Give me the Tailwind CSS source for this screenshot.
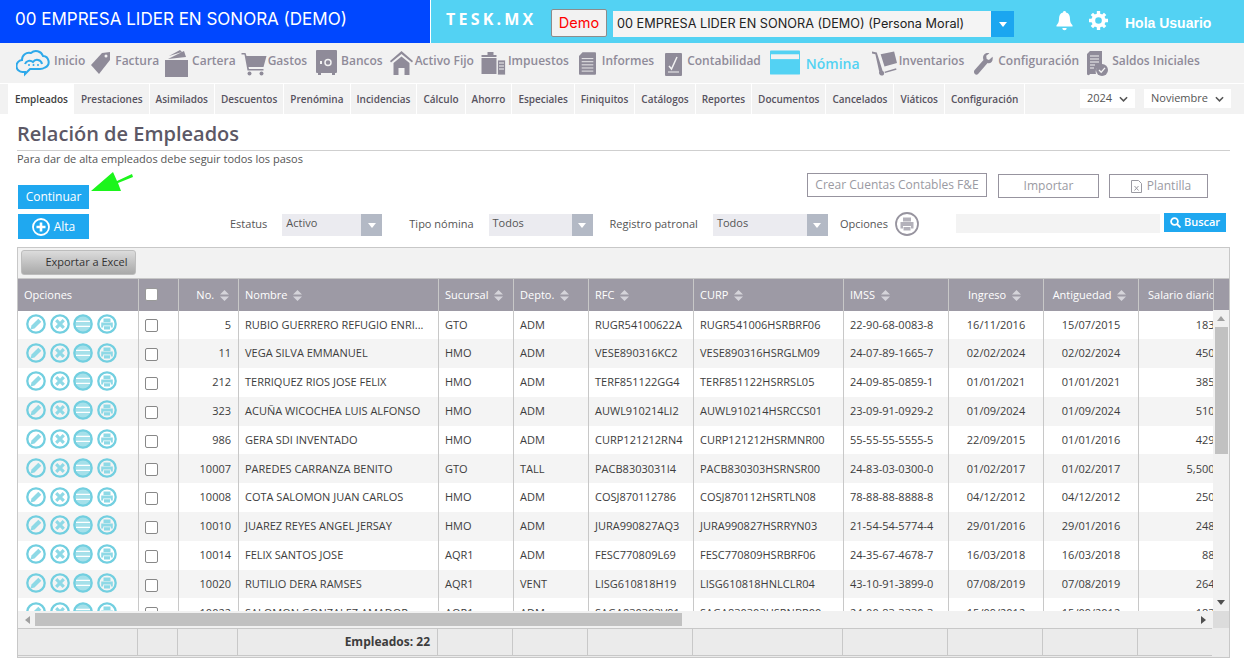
<!DOCTYPE html>
<html lang="es">
<head>
<meta charset="utf-8">
<script src="https://cdn.jsdelivr.net/npm/@tailwindcss/browser@4"></script>
<title>Relación de Empleados</title>
</head>
<body class="bg-white font-['Open_Sans',sans-serif] text-[11px] text-[#3d3d3d] overflow-hidden w-[1244px] h-[668px]">
<svg class="hidden">
  <symbol id="i-edit" viewBox="0 0 20 20"><circle cx="10" cy="10" r="8.700" fill="none" stroke="#72cfe0" stroke-width="2.300"/><path d="M4.500 15.500l1-4 6.800-6.800 3 3-6.800 6.800z" fill="#8ed9e6"/></symbol>
  <symbol id="i-del" viewBox="0 0 20 20"><circle cx="10" cy="10" r="8.700" fill="none" stroke="#72cfe0" stroke-width="2.300"/><path d="M6.200 6.200l7.600 7.600M13.800 6.200l-7.600 7.600" stroke="#8ed9e6" stroke-width="3.200" fill="none"/></symbol>
  <symbol id="i-list" viewBox="0 0 20 20"><circle cx="10" cy="10" r="8.700" fill="#a5e0ea" stroke="#72cfe0" stroke-width="2.300"/><path d="M3 7.300h14M3 12.300h14" stroke="#fff" stroke-width="1.200" fill="none"/></symbol>
  <symbol id="i-print" viewBox="0 0 20 20"><circle cx="10" cy="10" r="8.700" fill="none" stroke="#72cfe0" stroke-width="2.300"/><path d="M6.500 4.500h7v3.500h-7zM4.200 8.500h11.600v5h-2v-2H6.200v2h-2zM7 12.200h6v3.300H7z" fill="#8ed9e6"/></symbol>
  <symbol id="i-sort" viewBox="0 0 9 11"><path d="M4.500 0L9 4.600H0zM4.500 11L0 6.400h9z" fill="#d5d4da"/></symbol>
  <symbol id="i-chev" viewBox="0 0 10 6"><path d="M1 1l4 4 4-4" fill="none" stroke="#555" stroke-width="1.700"/></symbol>
  <symbol id="i-tri" viewBox="0 0 10 6"><path d="M0 0h10L5 6z" fill="#fff"/></symbol>
</svg>

<!-- Barra superior -->
<header class="flex h-[44px] border-b border-[#f2f2f2]">
  <div class="w-[430px] bg-[#0047ff] text-white font-['Inter',sans-serif] text-[17px] pl-[15px] leading-[38px] mr-px whitespace-nowrap">00 EMPRESA LIDER EN SONORA (DEMO)</div>
  <div class="flex-1 bg-[#53d2f3] flex items-start">
    <span class="ml-[15px] mt-[9px] font-bold text-white text-[16px] tracking-[3.200px] leading-[20px] w-[105px] whitespace-nowrap">TESK.MX</span>
    <button class="w-[56px] h-[28px] mt-[9px] bg-[#f2f2f2] border border-[#8c8c8c] rounded-[2px] text-[#ff0000] font-['Inter',sans-serif] text-[14.500px]">Demo</button>
    <div class="ml-[6px] mt-[11px] w-[401px] h-[26px] bg-[#f4f4f4] flex items-center">
      <span class="flex-1 pl-[4px] text-[12.700px] text-[#222] font-['Inter',sans-serif] whitespace-nowrap overflow-hidden">00 EMPRESA LIDER EN SONORA (DEMO) (Persona Moral)</span>
      <span class="w-[23px] h-[26px] bg-[#1ba6f0] flex items-center justify-center"><svg class="w-[8px] h-[5px]"><use href="#i-tri"/></svg></span>
    </div>
    <svg class="ml-[42px] mt-[11px] w-[17px] h-[20px]" viewBox="0 0 17 20" fill="#fff"><path d="M8.500 0a1.500 1.500 0 0 1 1.500 1.600c3 .7 4 3.200 4 6.400 0 3.300 1 4.400 2.500 6.200v1.300H.5v-1.300C2 12.400 3 11.300 3 8c0-3.200 1-5.700 4-6.400A1.500 1.500 0 0 1 8.500 0zM6.300 17h4.400a2.200 2.200 0 0 1-4.400 0z"/></svg>
    <svg class="ml-[16px] mt-[11px] w-[19px] h-[19px]" viewBox="0 0 20 20"><circle cx="10" cy="10" r="5.500" fill="none" stroke="#fff" stroke-width="4"/><path d="M10 10L10 0M10 10L10 20M10 10L0 10M10 10L20 10M10 10L3 3M10 10L17 17M10 10L17 3M10 10L3 17" stroke="#fff" stroke-width="3.500" stroke-dasharray="0 6.500 3.500 10"/></svg>
    <span class="ml-[17px] mt-[14px] font-['Liberation_Sans',sans-serif] font-bold text-white text-[14px] leading-[18px] whitespace-nowrap">Hola Usuario</span>
  </div>
</header>

<!-- Menú principal -->
<nav class="h-[39px] bg-[#f2f2f2] flex items-start pl-[16px] text-[12px] font-semibold text-[#8f8b99] whitespace-nowrap leading-[17px]">
  <svg class="mt-[4px] w-[35px] h-[30px]" viewBox="0 0 35 30" fill="none" stroke="#2ea9ea" stroke-width="2"><path d="M9 24H7a6 6 0 0 1-1-12 7 7 0 0 1 9-7 7.500 7.500 0 0 1 12 3 6 6 0 0 1 2 11.500c-1.500 1-3 1.500-5 1.500H14l-5 5z"/><path d="M9 16a5 5 0 0 1 8-2 5 5 0 0 1 9 2"/><path d="M13 17v.1M17.500 17v.1M22 17v.1" stroke-linecap="round"/></svg>
  <span class="ml-[3px] mt-[8px]">Inicio</span>
  <svg class="ml-[5px] mt-[7px] w-[21px] h-[24px]" viewBox="0 0 21 24" fill="#8f8b99"><path d="M1 14L12 2l8-1 0 8L9 23z"/><circle cx="16" cy="5" r="1.500" fill="#f2f2f2"/></svg>
  <span class="ml-[4px] mt-[8px]">Factura</span>
  <svg class="ml-[6px] mt-[5px] w-[25px] h-[28px]" viewBox="0 0 25 28" fill="#8f8b99"><path d="M3 10L19 2l2 6zM4 7L15 1l2 2zM0 11h23v17H0z"/></svg>
  <span class="ml-[2px] mt-[8px]">Cartera</span>
  <svg class="ml-[5px] mt-[8px] w-[26px] h-[24px]" viewBox="0 0 25 24" fill="#8f8b99"><path d="M0 1h4l1 3h20l-3 11H7l.5 2H22v1.500H6L3 2.500H0z"/><circle cx="8" cy="21.500" r="2"/><circle cx="20" cy="21.500" r="2"/></svg>
  <span class="ml-px mt-[8px]">Gastos</span>
  <svg class="ml-[9px] mt-[6px] w-[21px] h-[25px]" viewBox="0 0 21 25"><path d="M1 0h19a1 1 0 0 1 1 1v21a1 1 0 0 1-1 1h-1v2h-3v-2H5v2H2v-2H1a1 1 0 0 1-1-1V1a1 1 0 0 1 1-1z" fill="#8f8b99"/><circle cx="12" cy="12.500" r="3" fill="none" stroke="#f2f2f2" stroke-width="1.500"/><path d="M4 11h2v3H4z" fill="#f2f2f2"/></svg>
  <span class="ml-[4px] mt-[8px]">Bancos</span>
  <svg class="ml-[7px] mt-[7px] w-[23px] h-[24px]" viewBox="0 0 23 24" fill="#8f8b99"><path d="M11.500 0L23 10l-1 1.500L11.500 3 1 11.500 0 10zM3.500 12l8-6.500 8 6.500v12h-5v-7h-6v7h-5z"/></svg>
  <span class="ml-[2px] mt-[8px]">Activo Fijo</span>
  <svg class="ml-[7px] mt-[8px] w-[25px] h-[23px]" viewBox="0 0 24 23" fill="#8f8b99"><path d="M6 0h6v3h3v2H0V3h6zM0 6h15v16H0z"/><path d="M16 8h8v15h-8z" stroke="#f2f2f2" stroke-width=".8"/><path d="M17.500 11h5M17.500 14h5M17.500 17h5" stroke="#f2f2f2"/></svg>
  <span class="ml-[2px] mt-[8px]">Impuestos</span>
  <svg class="ml-[10px] mt-[7px] w-[17px] h-[25px]" viewBox="0 0 19 25"><path d="M4 0h14a1 1 0 0 1 1 1v23a1 1 0 0 1-1 1H1a1 1 0 0 1-1-1V4z" fill="#8f8b99"/><path d="M3 7h13M3 10.500h13M3 14h13M3 17.500h13M3 21h13" stroke="#f2f2f2" stroke-width="1"/></svg>
  <span class="ml-[6px] mt-[8px]">Informes</span>
  <svg class="ml-[11px] mt-[7px] w-[17px] h-[25px]" viewBox="0 0 17 25"><path d="M1 2h15a1 1 0 0 1 1 1v21a1 1 0 0 1-1 1H1a1 1 0 0 1-1-1V3a1 1 0 0 1 1-1z" fill="#8f8b99"/><path d="M4 15l2.500 3L12 6" fill="none" stroke="#f2f2f2" stroke-width="1.500"/><path d="M3 21h11" stroke="#f2f2f2"/></svg>
  <span class="ml-[5px] mt-[8px]">Contabilidad</span>
  <svg class="ml-[9px] mt-[6px] w-[30px] h-[25px]" viewBox="0 0 31 25"><path d="M0 1a1 1 0 0 1 1-1h29a1 1 0 0 1 1 1v23a1 1 0 0 1-1 1H1a1 1 0 0 1-1-1z" fill="#53d2f3"/><path d="M1 4h29v5H1z" fill="#f2f2f2"/></svg>
  <span class="ml-[6px] mt-[11px] text-[14px] font-semibold text-[#53d2f3]">Nómina</span>
  <svg class="ml-[12px] mt-[7px] w-[25px] h-[25px]" viewBox="0 0 26 25" fill="#8f8b99"><path d="M0 0l5 1 6 19a3 3 0 0 1 1 4.500 3 3 0 0 1-4.500-3.500L3.500 3 0 2zM9 3l14-3 3 12-13 3.500z"/><path d="M13 21l12-3.500.5 1.500-12 3.500z"/></svg>
  <span class="ml-[2px] mt-[8px]">Inventarios</span>
  <svg class="ml-[10px] mt-[8px] w-[19px] h-[24px]" viewBox="0 0 21 24" fill="#8f8b99"><path d="M20.500 4l-4 3.500L14 6.500 13.500 3 17 0c-3.500-1-7 1-7 5 0 1 .2 1.700.5 2.500L.5 19c-1 1.500-.5 3 .5 4s2.500 1 3.500 0L15 11c3.500 1 6.500-2 5.500-7z"/></svg>
  <span class="ml-[5px] mt-[8px]">Configuración</span>
  <svg class="ml-[8px] mt-[7px] w-[21px] h-[25px]" viewBox="0 0 21 25"><path d="M3 0h12v14a7 7 0 0 0-6 9H3a1 1 0 0 1-3-1V3z" fill="#8f8b99"/><path d="M3 5h9M3 8h9M3 11h9M3 14h5M3 17h4" stroke="#f2f2f2"/><circle cx="15" cy="19" r="6" fill="#8f8b99"/><path d="M12 19l2.200 2.200L18 16.800" stroke="#f2f2f2" stroke-width="1.300" fill="none"/></svg>
  <span class="ml-[4px] mt-[8px]">Saldos Iniciales</span>
</nav>

<!-- Pestañas -->
<div class="h-[31px] bg-[#f2f2f2] border-t border-white flex items-stretch pl-[8px] text-[10px] font-semibold text-[#57535f] whitespace-nowrap">
  <a class="bg-white pl-[7px] pr-[6px] flex items-center text-[#3d3d3d]">Empleados</a>
  <a class="pl-[7px] pr-[6px] flex items-center border-r border-white">Prestaciones</a>
  <a class="px-[6px] flex items-center border-r border-white">Asimilados</a>
  <a class="px-[6px] flex items-center border-r border-white">Descuentos</a>
  <a class="px-[6px] flex items-center border-r border-white">Prenómina</a>
  <a class="px-[6px] flex items-center border-r border-white">Incidencias</a>
  <a class="px-[6px] flex items-center border-r border-white">Cálculo</a>
  <a class="px-[6px] flex items-center border-r border-white">Ahorro</a>
  <a class="px-[6px] flex items-center border-r border-white">Especiales</a>
  <a class="px-[6px] flex items-center border-r border-white">Finiquitos</a>
  <a class="px-[6px] flex items-center border-r border-white">Catálogos</a>
  <a class="px-[6px] flex items-center border-r border-white">Reportes</a>
  <a class="px-[6px] flex items-center border-r border-white">Documentos</a>
  <a class="px-[6px] flex items-center border-r border-white">Cancelados</a>
  <a class="px-[6px] flex items-center border-r border-white">Viáticos</a>
  <a class="px-[6px] flex items-center border-r border-white">Configuración</a>
  <div class="ml-auto mr-[13px] flex items-start gap-[9px] pt-[5px] font-normal text-[11px] text-[#555]">
    <span class="w-[55px] h-[19px] bg-white flex items-center justify-between px-[7px]">2024<svg class="w-[9px] h-[6px]"><use href="#i-chev"/></svg></span>
    <span class="w-[87px] h-[19px] bg-white flex items-center justify-between px-[7px]">Noviembre<svg class="w-[9px] h-[6px]"><use href="#i-chev"/></svg></span>
  </div>
</div>

<!-- Contenido -->
<main class="pl-[17px] pr-[14px]">
  <h1 class="text-[20px] font-semibold text-[#5c5866] leading-[26px] pt-[7px] pb-[3px] border-b border-[#cfcfcf]">Relación de Empleados</h1>
  <p class="text-[11px] text-[#555] leading-[15px]">Para dar de alta empleados debe seguir todos los pasos</p>

  <div class="flex items-start h-[41px] mt-[7px] relative">
    <button class="ml-px mt-[12px] w-[71px] h-[24px] bg-[#1fa8f0] text-white text-[12px]">Continuar</button>
    <svg class="absolute left-[73px] -top-px w-[44px] h-[20px]" viewBox="0 0 44 20"><path d="M1 19L23 0l4 9 15-7 1 3-15 6 3 8z" fill="#1cf51c"/></svg>
    <div class="ml-auto mr-[22px] flex text-[#9a9aa2] text-[12px]">
      <button class="w-[180px] h-[24px] border border-[#97949f]">Crear Cuentas Contables F&amp;E</button>
      <button class="ml-[11px] w-[101px] h-[24px] mt-px border border-[#97949f]">Importar</button>
      <button class="ml-[10px] w-[99px] h-[24px] mt-px pl-[5px] border border-[#97949f] flex items-center justify-center gap-[5px]"><svg class="w-[11px] h-[13px]" viewBox="0 0 11 13" fill="none" stroke="#9a9aa2"><path d="M.5.500h7l3 3v9H.500zM3.500 6l4 4.500M7.500 6l-4 4.500"/></svg>Plantilla</button>
    </div>
  </div>

  <div class="flex items-start h-[33px] text-[11px] text-[#555]">
    <button class="ml-px w-[71px] h-[25px] bg-[#1fa8f0] text-white text-[12px] flex items-center justify-center gap-[4px]"><svg class="w-[18px] h-[18px]" viewBox="0 0 18 18"><circle cx="9" cy="9" r="8" fill="none" stroke="#fff" stroke-width="1.800"/><path d="M9 4.500v9M4.500 9h9" stroke="#fff" stroke-width="2.600"/></svg>Alta</button>
    <span class="ml-[141px] mt-[2px]">Estatus</span>
    <span class="ml-[15px] w-[100px] h-[22px] bg-[#ebebf0] flex justify-between"><span class="pl-[4px] leading-[18px]">Activo</span><span class="w-[21px] bg-[#b3b9c5] flex items-center justify-center"><svg class="w-[8px] h-[5px]"><use href="#i-tri"/></svg></span></span>
    <span class="ml-[27px] mt-[2px]">Tipo nómina</span>
    <span class="ml-[15px] w-[104px] h-[22px] bg-[#ebebf0] flex justify-between"><span class="pl-[4px] leading-[18px]">Todos</span><span class="w-[21px] bg-[#b3b9c5] flex items-center justify-center"><svg class="w-[8px] h-[5px]"><use href="#i-tri"/></svg></span></span>
    <span class="ml-[17px] mt-[2px]">Registro patronal</span>
    <span class="ml-[15px] w-[115px] h-[22px] bg-[#ebebf0] flex justify-between"><span class="pl-[4px] leading-[18px]">Todos</span><span class="w-[21px] bg-[#b3b9c5] flex items-center justify-center"><svg class="w-[8px] h-[5px]"><use href="#i-tri"/></svg></span></span>
    <span class="ml-[12px] mt-[2px]">Opciones</span>
    <svg class="ml-[7px] -mt-[2px] w-[24px] h-[24px]" viewBox="0 0 24 24"><circle cx="12" cy="12" r="11" fill="none" stroke="#97949f" stroke-width="1.800"/><path d="M8 5.500h8v4H8zM5.500 10h13v6.500h-2.500v-2.500H8v2.500H5.500zM8.500 15h7v3.500h-7z" fill="#b3b1ba"/></svg>
    <span class="ml-[37px] w-[204px] h-[19px] bg-[#f3f3f3]"></span>
    <button class="ml-[4px] -mt-px w-[62px] h-[19px] bg-[#1fa8f0] text-white text-[11px] font-semibold flex items-center justify-center gap-[3px]"><svg class="w-[11px] h-[11px]" viewBox="0 0 11 11" fill="none" stroke="#fff" stroke-width="1.800"><circle cx="4.500" cy="4.500" r="3.400"/><path d="M7 7l3.500 3.500"/></svg>Buscar</button>
  </div>

  <!-- Tabla -->
  <section class="w-[1213px] border border-[#c8c8c8]">
    <div class="h-[31px] bg-[#f2f2f2] pl-[3px] pt-[2px] border-b border-[#c8c8c8]">
      <button class="w-[115px] h-[25px] rounded-[3px] border border-[#bdbdbd] bg-gradient-to-b from-[#dcdcdc] to-[#a9a9a9] text-[11px] text-[#333] pl-[16px]">Exportar a Excel</button>
    </div>
    <div class="flex">
      <div class="w-[1195px] h-[332px] overflow-hidden">
        <table class="table-fixed border-separate border-spacing-0 w-[1224px] text-[11px]">
          <colgroup><col class="w-[121px]"><col class="w-[40px]"><col class="w-[60px]"><col class="w-[200px]"><col class="w-[75px]"><col class="w-[75px]"><col class="w-[105px]"><col class="w-[150px]"><col class="w-[105px]"><col class="w-[95px]"><col class="w-[95px]"><col class="w-[103px]"></colgroup>
          <thead class="bg-[#9d9aa5] text-white text-left">
            <tr class="h-[31.500px] [&>th]:font-normal [&>th]:border-r [&>th]:border-[#c8c8c8] [&>th]:whitespace-nowrap">
              <th class="pl-[6px]">Opciones</th>
              <th class="pl-[6px]"><input type="checkbox" class="block w-[13px] h-[13px] appearance-none bg-white border border-[#999] rounded-[2px]"></th>
              <th class="text-right pr-[9px]">No. <svg class="inline ml-[3px] w-[9px] h-[11px]"><use href="#i-sort"/></svg></th>
              <th class="pl-[6px]">Nombre <svg class="inline ml-[3px] w-[9px] h-[11px]"><use href="#i-sort"/></svg></th>
              <th class="pl-[6px]">Sucursal <svg class="inline ml-[3px] w-[9px] h-[11px]"><use href="#i-sort"/></svg></th>
              <th class="pl-[6px]">Depto. <svg class="inline ml-[3px] w-[9px] h-[11px]"><use href="#i-sort"/></svg></th>
              <th class="pl-[6px]">RFC <svg class="inline ml-[3px] w-[9px] h-[11px]"><use href="#i-sort"/></svg></th>
              <th class="pl-[6px]">CURP <svg class="inline ml-[3px] w-[9px] h-[11px]"><use href="#i-sort"/></svg></th>
              <th class="pl-[6px]">IMSS <svg class="inline ml-[3px] w-[9px] h-[11px]"><use href="#i-sort"/></svg></th>
              <th class="text-center pr-[3px]">Ingreso <svg class="inline ml-[3px] w-[9px] h-[11px]"><use href="#i-sort"/></svg></th>
              <th class="text-center pr-[3px]">Antiguedad <svg class="inline ml-[3px] w-[9px] h-[11px]"><use href="#i-sort"/></svg></th>
              <th class="pl-[9px]">Salario diario</th>
            </tr>
          </thead>
          <tbody class="[&_td]:border-r [&_td]:border-[#c8c8c8] [&_td]:whitespace-nowrap [&_tr]:h-[28.800px] [&_tr:nth-child(even)]:bg-[#f4f4f4] [&_td:nth-child(1)]:pl-[8px] [&_td:nth-child(2)]:pl-[6px] [&_td:nth-child(3)]:text-right [&_td:nth-child(3)]:pr-[7px] [&_td:nth-child(4)]:pl-[6px] [&_td:nth-child(5)]:pl-[6px] [&_td:nth-child(6)]:pl-[6px] [&_td:nth-child(7)]:pl-[6px] [&_td:nth-child(8)]:pl-[6px] [&_td:nth-child(9)]:pl-[6px] [&_td:nth-child(10)]:text-center [&_td:nth-child(11)]:text-center [&_td:nth-child(12)]:text-right [&_td:nth-child(12)]:pr-[11px]">
            <tr><td><div class="flex gap-[3.500px] -mt-[2px]"><svg class="w-[20px] h-[20px]"><use href="#i-edit"/></svg><svg class="w-[20px] h-[20px]"><use href="#i-del"/></svg><svg class="w-[20px] h-[20px]"><use href="#i-list"/></svg><svg class="w-[20px] h-[20px]"><use href="#i-print"/></svg></div></td><td><input type="checkbox" class="block mt-[2px] w-[13px] h-[13px] appearance-none bg-white border border-[#888] rounded-[2px]"></td><td>5</td><td>RUBIO GUERRERO REFUGIO ENRI...</td><td>GTO</td><td>ADM</td><td>RUGR54100622A</td><td>RUGR541006HSRBRF06</td><td>22-90-68-0083-8</td><td>16/11/2016</td><td>15/07/2015</td><td>183.87</td></tr>
            <tr><td><div class="flex gap-[3.500px] -mt-[2px]"><svg class="w-[20px] h-[20px]"><use href="#i-edit"/></svg><svg class="w-[20px] h-[20px]"><use href="#i-del"/></svg><svg class="w-[20px] h-[20px]"><use href="#i-list"/></svg><svg class="w-[20px] h-[20px]"><use href="#i-print"/></svg></div></td><td><input type="checkbox" class="block mt-[2px] w-[13px] h-[13px] appearance-none bg-white border border-[#888] rounded-[2px]"></td><td>11</td><td>VEGA SILVA EMMANUEL</td><td>HMO</td><td>ADM</td><td>VESE890316KC2</td><td>VESE890316HSRGLM09</td><td>24-07-89-1665-7</td><td>02/02/2024</td><td>02/02/2024</td><td>450.00</td></tr>
            <tr><td><div class="flex gap-[3.500px] -mt-[2px]"><svg class="w-[20px] h-[20px]"><use href="#i-edit"/></svg><svg class="w-[20px] h-[20px]"><use href="#i-del"/></svg><svg class="w-[20px] h-[20px]"><use href="#i-list"/></svg><svg class="w-[20px] h-[20px]"><use href="#i-print"/></svg></div></td><td><input type="checkbox" class="block mt-[2px] w-[13px] h-[13px] appearance-none bg-white border border-[#888] rounded-[2px]"></td><td>212</td><td>TERRIQUEZ RIOS JOSE FELIX</td><td>HMO</td><td>ADM</td><td>TERF851122GG4</td><td>TERF851122HSRRSL05</td><td>24-09-85-0859-1</td><td>01/01/2021</td><td>01/01/2021</td><td>385.00</td></tr>
            <tr><td><div class="flex gap-[3.500px] -mt-[2px]"><svg class="w-[20px] h-[20px]"><use href="#i-edit"/></svg><svg class="w-[20px] h-[20px]"><use href="#i-del"/></svg><svg class="w-[20px] h-[20px]"><use href="#i-list"/></svg><svg class="w-[20px] h-[20px]"><use href="#i-print"/></svg></div></td><td><input type="checkbox" class="block mt-[2px] w-[13px] h-[13px] appearance-none bg-white border border-[#888] rounded-[2px]"></td><td>323</td><td>ACUÑA WICOCHEA LUIS ALFONSO</td><td>HMO</td><td>ADM</td><td>AUWL910214LI2</td><td>AUWL910214HSRCCS01</td><td>23-09-91-0929-2</td><td>01/09/2024</td><td>01/09/2024</td><td>510.00</td></tr>
            <tr><td><div class="flex gap-[3.500px] -mt-[2px]"><svg class="w-[20px] h-[20px]"><use href="#i-edit"/></svg><svg class="w-[20px] h-[20px]"><use href="#i-del"/></svg><svg class="w-[20px] h-[20px]"><use href="#i-list"/></svg><svg class="w-[20px] h-[20px]"><use href="#i-print"/></svg></div></td><td><input type="checkbox" class="block mt-[2px] w-[13px] h-[13px] appearance-none bg-white border border-[#888] rounded-[2px]"></td><td>986</td><td>GERA SDI INVENTADO</td><td>HMO</td><td>ADM</td><td>CURP121212RN4</td><td>CURP121212HSRMNR00</td><td>55-55-55-5555-5</td><td>22/09/2015</td><td>01/01/2016</td><td>429.00</td></tr>
            <tr><td><div class="flex gap-[3.500px] -mt-[2px]"><svg class="w-[20px] h-[20px]"><use href="#i-edit"/></svg><svg class="w-[20px] h-[20px]"><use href="#i-del"/></svg><svg class="w-[20px] h-[20px]"><use href="#i-list"/></svg><svg class="w-[20px] h-[20px]"><use href="#i-print"/></svg></div></td><td><input type="checkbox" class="block mt-[2px] w-[13px] h-[13px] appearance-none bg-white border border-[#888] rounded-[2px]"></td><td>10007</td><td>PAREDES CARRANZA BENITO</td><td>GTO</td><td>TALL</td><td>PACB8303031I4</td><td>PACB830303HSRNSR00</td><td>24-83-03-0300-0</td><td>01/02/2017</td><td>01/02/2017</td><td>5,500.00</td></tr>
            <tr><td><div class="flex gap-[3.500px] -mt-[2px]"><svg class="w-[20px] h-[20px]"><use href="#i-edit"/></svg><svg class="w-[20px] h-[20px]"><use href="#i-del"/></svg><svg class="w-[20px] h-[20px]"><use href="#i-list"/></svg><svg class="w-[20px] h-[20px]"><use href="#i-print"/></svg></div></td><td><input type="checkbox" class="block mt-[2px] w-[13px] h-[13px] appearance-none bg-white border border-[#888] rounded-[2px]"></td><td>10008</td><td>COTA SALOMON JUAN CARLOS</td><td>HMO</td><td>ADM</td><td>COSJ870112786</td><td>COSJ870112HSRTLN08</td><td>78-88-88-8888-8</td><td>04/12/2012</td><td>04/12/2012</td><td>250.00</td></tr>
            <tr><td><div class="flex gap-[3.500px] -mt-[2px]"><svg class="w-[20px] h-[20px]"><use href="#i-edit"/></svg><svg class="w-[20px] h-[20px]"><use href="#i-del"/></svg><svg class="w-[20px] h-[20px]"><use href="#i-list"/></svg><svg class="w-[20px] h-[20px]"><use href="#i-print"/></svg></div></td><td><input type="checkbox" class="block mt-[2px] w-[13px] h-[13px] appearance-none bg-white border border-[#888] rounded-[2px]"></td><td>10010</td><td>JUAREZ REYES ANGEL JERSAY</td><td>HMO</td><td>ADM</td><td>JURA990827AQ3</td><td>JURA990827HSRRYN03</td><td>21-54-54-5774-4</td><td>29/01/2016</td><td>29/01/2016</td><td>248.00</td></tr>
            <tr><td><div class="flex gap-[3.500px] -mt-[2px]"><svg class="w-[20px] h-[20px]"><use href="#i-edit"/></svg><svg class="w-[20px] h-[20px]"><use href="#i-del"/></svg><svg class="w-[20px] h-[20px]"><use href="#i-list"/></svg><svg class="w-[20px] h-[20px]"><use href="#i-print"/></svg></div></td><td><input type="checkbox" class="block mt-[2px] w-[13px] h-[13px] appearance-none bg-white border border-[#888] rounded-[2px]"></td><td>10014</td><td>FELIX SANTOS JOSE</td><td>AQR1</td><td>ADM</td><td>FESC770809L69</td><td>FESC770809HSRBRF06</td><td>24-35-67-4678-7</td><td>16/03/2018</td><td>16/03/2018</td><td>88.36</td></tr>
            <tr><td><div class="flex gap-[3.500px] -mt-[2px]"><svg class="w-[20px] h-[20px]"><use href="#i-edit"/></svg><svg class="w-[20px] h-[20px]"><use href="#i-del"/></svg><svg class="w-[20px] h-[20px]"><use href="#i-list"/></svg><svg class="w-[20px] h-[20px]"><use href="#i-print"/></svg></div></td><td><input type="checkbox" class="block mt-[2px] w-[13px] h-[13px] appearance-none bg-white border border-[#888] rounded-[2px]"></td><td>10020</td><td>RUTILIO DERA RAMSES</td><td>AQR1</td><td>VENT</td><td>LISG610818H19</td><td>LISG610818HNLCLR04</td><td>43-10-91-3899-0</td><td>07/08/2019</td><td>07/08/2019</td><td>264.00</td></tr>
            <tr><td><div class="flex gap-[3.500px] -mt-[2px]"><svg class="w-[20px] h-[20px]"><use href="#i-edit"/></svg><svg class="w-[20px] h-[20px]"><use href="#i-del"/></svg><svg class="w-[20px] h-[20px]"><use href="#i-list"/></svg><svg class="w-[20px] h-[20px]"><use href="#i-print"/></svg></div></td><td><input type="checkbox" class="block mt-[2px] w-[13px] h-[13px] appearance-none bg-white border border-[#888] rounded-[2px]"></td><td>10022</td><td>SALOMON GONZALEZ AMADOR</td><td>AQR1</td><td>ADM</td><td>SAGA830303V91</td><td>SAGA830303HSRNBR00</td><td>24-00-83-3330-3</td><td>15/09/2012</td><td>15/09/2012</td><td>183.00</td></tr>
          </tbody>
        </table>
      </div>
      <!-- Barra vertical -->
      <div class="w-[16px] h-[332px] flex flex-col">
        <div class="h-[31px] bg-[#9d9aa5] border-l border-[#c8c8c8]"></div>
        <div class="flex-1 bg-[#f1f1f1] flex flex-col items-center">
          <svg class="w-[8px] h-[5px] mt-[6px] mb-[6px] rotate-180"><path d="M0 0h8L4 5z" fill="#a0a0a0"/></svg>
          <div class="w-[13px] h-[127px] bg-[#c1c1c1]"></div>
          <svg class="w-[8px] h-[5px] mt-auto mb-[6px]"><path d="M0 0h8L4 5z" fill="#505050"/></svg>
        </div>
      </div>
    </div>
    <!-- Barra horizontal -->
    <div class="flex h-[17px]">
      <div class="w-[1195px] bg-[#f1f1f1] flex items-center pl-[7px] pr-[6px]">
        <svg class="w-[5px] h-[8px]"><path d="M5 0v8L0 4z" fill="#a0a0a0"/></svg>
        <div class="ml-[5px] w-[647px] h-[13px] bg-[#c1c1c1]"></div>
        <svg class="w-[5px] h-[8px] ml-auto mr-[1px]"><path d="M0 0v8l5-4z" fill="#505050"/></svg>
      </div>
      <div class="w-[16px] bg-[#dcdcdc]"></div>
    </div>
    <!-- Pie -->
    <div class="bg-[#ebebeb] pb-px">
      <div class="w-[1194px] h-[28px] border-y border-[#c8c8c8] grid grid-cols-[120px_40px_60px_200px_75px_75px_105px_150px_105px_95px_95px] [&>div]:border-r [&>div]:border-[#c8c8c8]">
        <div></div><div></div><div></div>
        <div class="text-right pr-[7px] font-bold text-[12px] text-[#3d3d3d] leading-[26px]">Empleados: 22</div>
        <div></div><div></div><div></div><div></div><div></div><div></div><div></div>
      </div>
    </div>
  </section>
</main>
</body>
</html>
